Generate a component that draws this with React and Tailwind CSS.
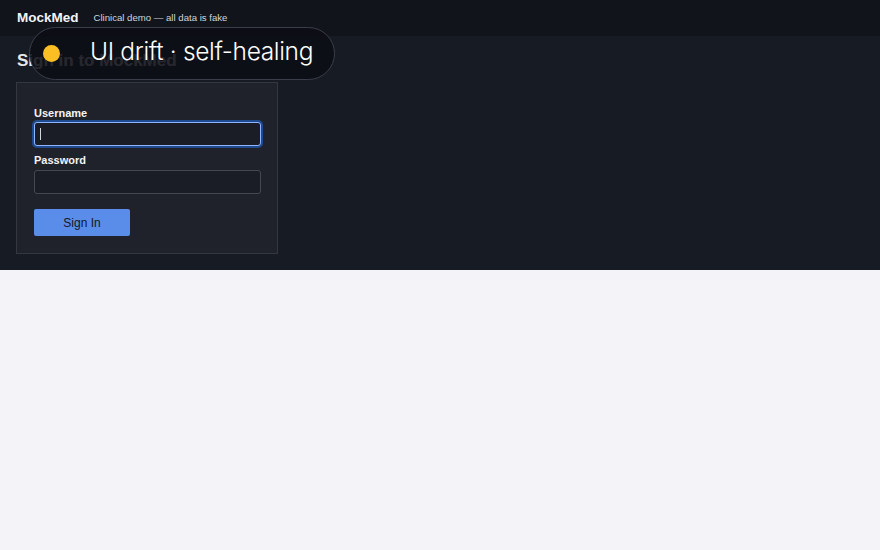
export default function App() {
  return (
    <div className="relative w-[880px] h-[550px] bg-[#f4f4f8] font-['Liberation_Sans',Arial,sans-serif]">
      <div className="bg-[#171b24] h-[270px]">
        <div className="h-9 bg-[#11141b] flex items-center px-[17px] gap-[15px]">
          <span className="text-[13.5px] font-bold text-[#f3f4f6]">MockMed</span>
          <span className="text-[9.6px] text-[#d1d5db] mt-[1px]">Clinical demo — all data is fake</span>
        </div>
        <div className="px-4 pt-[15px]">
          <h1 className="text-[17px] font-bold text-[#e5e7eb] leading-[20px] pl-[1px]">Sign in to MockMed</h1>
          <div className="mt-[11px] w-[262px] h-[172px] bg-[#1f222b] border border-[#343741] px-[17px] pt-[23px]">
            <div className="text-[11px] font-bold text-[#f3f4f6] leading-[14px]">Username</div>
            <div className="mt-[2px] h-[24px] w-[227px] rounded-[3px] border border-[#8fb4ff] ring-2 ring-[#1f4a8f] bg-[#1a1d26] flex items-center pl-[5px]">
              <div className="w-[1px] h-[12px] bg-[#d1d5db]" />
            </div>
            <div className="mt-[7px] text-[11px] font-bold text-[#f3f4f6] leading-[14px]">Password</div>
            <div className="mt-[3px] h-[24px] w-[227px] rounded-[3px] border border-[#454852] bg-[#1a1d26]" />
            <div className="mt-[15px] w-[96px] h-[27px] rounded-[2px] bg-[#5a8de9] flex items-center justify-center text-[12px] text-[#111827]">
              Sign In
            </div>
          </div>
        </div>
      </div>
      <div className="absolute left-[29px] top-[27px] w-[306px] h-[53px] rounded-full bg-[rgba(12,14,21,0.88)] border border-[#3b3e4a] flex items-center pl-[13px]">
        <div className="w-[17px] h-[17px] rounded-full bg-[#fbbf24]" />
        <span className="ml-[30px] text-[24.5px] font-light text-white tracking-[-0.35px] font-['Inter',sans-serif] leading-none pb-[4px]">UI drift · self-healing</span>
      </div>
    </div>
  );
}
